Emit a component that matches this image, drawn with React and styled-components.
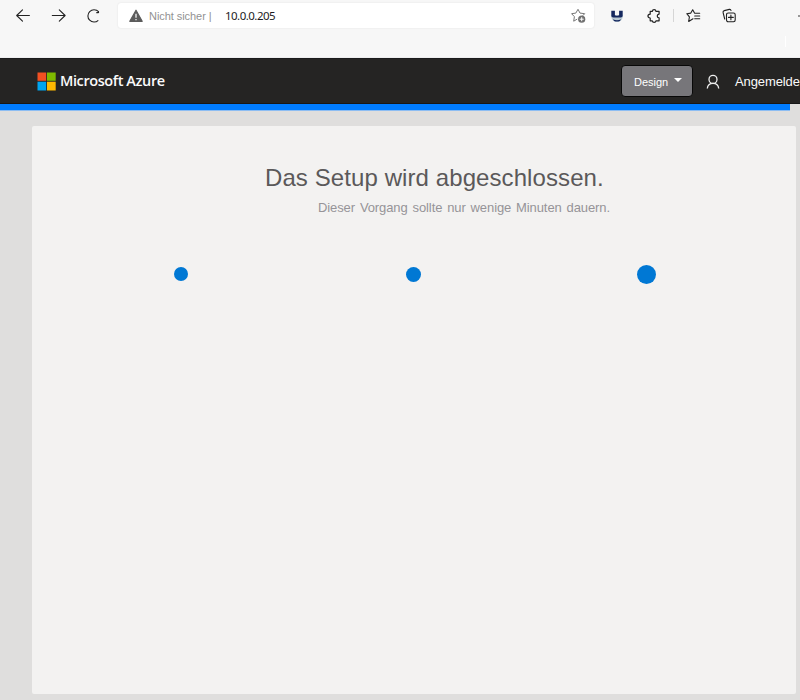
import React from 'react';
import styled, { createGlobalStyle } from 'styled-components';

const GlobalStyle = createGlobalStyle`
  * { box-sizing: border-box; }
  html, body { margin: 0; overflow: hidden; background: #dfdedd; }
  body { font-family: "Liberation Sans", Arial, sans-serif; }
`;

const Page = styled.div`
  width: 800px;
  height: 700px;
  overflow: hidden;
  display: flex;
  flex-direction: column;
  background: #dfdedd;
`;

const BrowserBar = styled.div`
  display: flex;
  align-items: flex-start;
  height: 58px;
  flex: none;
  padding: 3px 0 0 15px;
  background: #f7f7f7;
  border-bottom: 1px solid #eeeeef;
`;

const ToolSlot = styled.div`
  display: flex;
  align-items: center;
  justify-content: center;
  flex: none;
  width: ${(p) => p.$width}px;
  height: 25px;
  margin-left: ${(p) => p.$gap || 0}px;
`;

const AddressBar = styled.div`
  display: flex;
  align-items: center;
  flex: none;
  width: 476px;
  height: 25px;
  margin-left: 16px;
  padding: 0 7px 0 11px;
  border-radius: 3px;
  background: #fff;
  box-shadow: 0 0 2px rgba(0, 0, 0, 0.1);
`;

const Security = styled.span`
  width: 62px;
  margin-left: 6px;
  padding-top: 1px;
  font-size: 11px;
  line-height: 24px;
  letter-spacing: -0.06px;
  white-space: nowrap;
  color: #929292;
`;

const Url = styled.span`
  flex: 1;
  margin-left: 14px;
  font: 11.5px/25px "Noto Sans", sans-serif;
  letter-spacing: -0.52px;
  color: #1c1c24;
`;

const Divider = styled.div`
  flex: none;
  width: 1px;
  height: 13px;
  margin: 6px 0 0 12px;
  background: #d6d6d6;
`;

const BarEdge = styled.div`
  flex: none;
  width: 1px;
  height: 11px;
  margin: 33px 0 0 49px;
  background: #fff;
`;

const MoreDot = styled.div`
  flex: none;
  width: 2px;
  height: 2px;
  margin: 12px 0 0 12px;
  border-radius: 1px;
  background: #777;
`;

const Header = styled.header`
  display: flex;
  align-items: center;
  flex: none;
  height: 46px;
  padding-left: 37px;
  background: #252423;
  border-top: 1px solid #1b1b1c;
  border-bottom: 1px solid #171717;
`;

const Brand = styled.div`
  flex: none;
  width: 110px;
  margin-left: 4px;
  font: 600 14.5px/20px "Open Sans", "Noto Sans", sans-serif;
  letter-spacing: -0.4px;
  white-space: nowrap;
  color: #fafafa;
`;

const DesignButton = styled.button`
  display: flex;
  align-items: center;
  flex: none;
  width: 72px;
  height: 32px;
  margin-left: 451px;
  padding: 1px 0 0 12px;
  border: 1px solid #080808;
  border-radius: 4px;
  background: #77767a;
  font: 11px "Liberation Sans", Arial, sans-serif;
  letter-spacing: 0;
  color: #fff;
`;

const Caret = styled.span`
  margin: -3px 0 0 6px;
  border: 4px solid transparent;
  border-top-color: #fff;
  border-bottom-width: 0;
`;

const Account = styled.div`
  display: flex;
  align-items: center;
  gap: 15px;
  flex: none;
  margin: 1px 0 0 13px;
  font-size: 13px;
  letter-spacing: -0.1px;
  white-space: nowrap;
  color: #fafafa;
`;

const Progress = styled.div`
  flex: none;
  width: 790px;
  height: 7px;
  background: #007cff;
  border-bottom: 1px solid #8dbdf2;
`;

const Panel = styled.main`
  flex: none;
  width: 764px;
  height: 568px;
  margin: 15px 0 0 32px;
  padding-top: 37px;
  border-radius: 2px;
  background: #f3f2f1;
`;

const Title = styled.h1`
  margin: 0 0 0 233px;
  font-size: 24px;
  line-height: 30px;
  font-weight: 400;
  letter-spacing: 0.09px;
  white-space: nowrap;
  color: #5b595a;
`;

const Subtitle = styled.p`
  margin: 7px 0 0 286px;
  font-size: 13px;
  line-height: 16px;
  letter-spacing: -0.1px;
  word-spacing: 1.4px;
  white-space: nowrap;
  color: #969498;
`;

const Dots = styled.div`
  display: grid;
  grid-template-columns: repeat(3, 233px);
  place-items: center;
  height: 20px;
  margin: 48px 0 0 32px;
`;

const Dot = styled.span`
  width: ${(p) => p.$size}px;
  height: ${(p) => p.$size}px;
  border-radius: 50%;
  background: #0078d4;
`;

const Svg = styled.svg`
  display: block;
  flex: none;
  overflow: visible;
`;

const line = { fill: 'none', stroke: '#222', strokeWidth: 1.1, strokeLinecap: 'round', strokeLinejoin: 'round' };

const BackIcon = () => (
  <Svg width="16" height="16" {...line}><path d="M14.4 7.5H1.8M7.5 1.8 1.7 7.5l5.8 5.7" /></Svg>
);
const ForwardIcon = () => (
  <Svg width="16" height="16" {...line}><path d="M1.3 7.5h12.8M8.3 1.8l5.8 5.7-5.8 5.7" /></Svg>
);
const ReloadIcon = () => (
  <Svg width="16" height="16" {...line} strokeLinecap="butt">
    <path d="M12.3 12.3Q10.5 14 8 14A6.1 6.1 0 0 1 8 1.8Q11 1.8 12.5 3.6V5M10.3 4.6h2.2" />
  </Svg>
);
const WarningIcon = () => (
  <Svg width="14" height="14">
    <path d="M7 1.2 13.2 12.3H.8Z" fill="#5c5c5c" stroke="#5c5c5c" strokeWidth="1.2" strokeLinejoin="round" />
    <path d="M7 4.7v4M7 10v1.3" stroke="#fff" strokeWidth="1.2" />
  </Svg>
);
const StarAddIcon = () => (
  <Svg width="16" height="16" fill="none" stroke="#777" strokeWidth="1" strokeLinejoin="round">
    <path d="M6.2 11.1 2.7 13.2l.7-4.5L.6 5.7l4.2-.6L7 1.3l2 3.8 4.7.6-2 2" />
    <circle cx="10.7" cy="11.2" r="3.6" fill="#707070" stroke="none" />
    <path d="M8.7 11.2h4M10.7 9.2v4" stroke="#fff" />
  </Svg>
);
const ShieldIcon = () => (
  <Svg width="14" height="14">
    <path d="M1 6.5Q1.5 13 7 13t6-6.5Z" fill="#b9c9d3" />
    <path d="M1.3 1.7h3.6v4.6q2.1.7 4.2 0V1.7h3.6v5q0 1.6-2 1.8H3.3q-2-.2-2-1.8Z" fill="#15285f" />
    <path d="M3 10.3q4 2 8 0l-1 1.8q-3 1-6 0Z" fill="#15285f" />
  </Svg>
);
const PuzzleIcon = () => (
  <Svg width="14" height="14" {...line} strokeWidth="1.2">
    <path d="M3.2 2.3h2.1c.3-2.2 3.4-2.2 3.7 0h3.1v2.8c-2.5.2-2.5 3.6 0 3.8v2.9H9c-.3 2-3.4 2-3.7 0H3.2V9c-3-.2-3-3.6 0-3.8Z" />
  </Svg>
);
const FavoritesIcon = () => (
  <Svg width="15" height="14" {...line}>
    <path d="M7 9.8 2.7 12.5l.7-4.7L.8 4.7l4-.6L6.7.8l1.8 3.3M8.7 4.2h5M8.7 7h5M8.7 9.8h5" />
  </Svg>
);
const CollectionsIcon = () => (
  <Svg width="14" height="14" {...line}>
    <rect x="4.5" y="4" width="8.7" height="8.8" rx="1.7" />
    <path d="M8.9 6v4.8M6.5 8.4h4.8M2.7 10 1.1 3.6Q.7 2 2.3 1.6l5-1.2q1.4-.3 1.7 1.1" />
  </Svg>
);
const MicrosoftLogo = () => (
  <Svg width="19" height="19">
    <path fill="#f25022" d="M.5.5h8.7v8.3H.5z" />
    <path fill="#7fba00" d="M10 .5h8.7v8.3H10z" />
    <path fill="#00a4ef" d="M.5 9.7h8.7v8.8H.5z" />
    <path fill="#ffb900" d="M10 9.7h8.7v8.8H10z" />
  </Svg>
);
const PersonIcon = () => (
  <Svg width="14" height="16" fill="none" stroke="#eee" strokeWidth="1.3">
    <circle cx="7" cy="5.4" r="4" /><path d="M1.3 14.5c.3-3.4 2.5-5.2 5.7-5.2s5.4 1.8 5.7 5.2" />
  </Svg>
);

export default function App() {
  return (
    <>
      <GlobalStyle />
      <Page>
        <BrowserBar>
          <ToolSlot $width={16}><BackIcon /></ToolSlot>
          <ToolSlot $width={16} $gap={20}><ForwardIcon /></ToolSlot>
          <ToolSlot $width={16} $gap={19}><ReloadIcon /></ToolSlot>
          <AddressBar>
            <WarningIcon />
            <Security>Nicht sicher |</Security>
            <Url>10.0.0.205</Url>
            <StarAddIcon />
          </AddressBar>
          <ToolSlot $width={14} $gap={16}><ShieldIcon /></ToolSlot>
          <ToolSlot $width={14} $gap={23}><PuzzleIcon /></ToolSlot>
          <Divider />
          <ToolSlot $width={15} $gap={12}><FavoritesIcon /></ToolSlot>
          <ToolSlot $width={14} $gap={21}><CollectionsIcon /></ToolSlot>
          <BarEdge />
          <MoreDot />
        </BrowserBar>
        <Header>
          <MicrosoftLogo />
          <Brand>Microsoft Azure</Brand>
          <DesignButton>Design<Caret /></DesignButton>
          <Account><PersonIcon /><span>Angemelde</span></Account>
        </Header>
        <Progress />
        <Panel>
          <Title>Das Setup wird abgeschlossen.</Title>
          <Subtitle>Dieser Vorgang sollte nur wenige Minuten dauern.</Subtitle>
          <Dots><Dot $size={14} /><Dot $size={15} /><Dot $size={19} /></Dots>
        </Panel>
      </Page>
    </>
  );
}
